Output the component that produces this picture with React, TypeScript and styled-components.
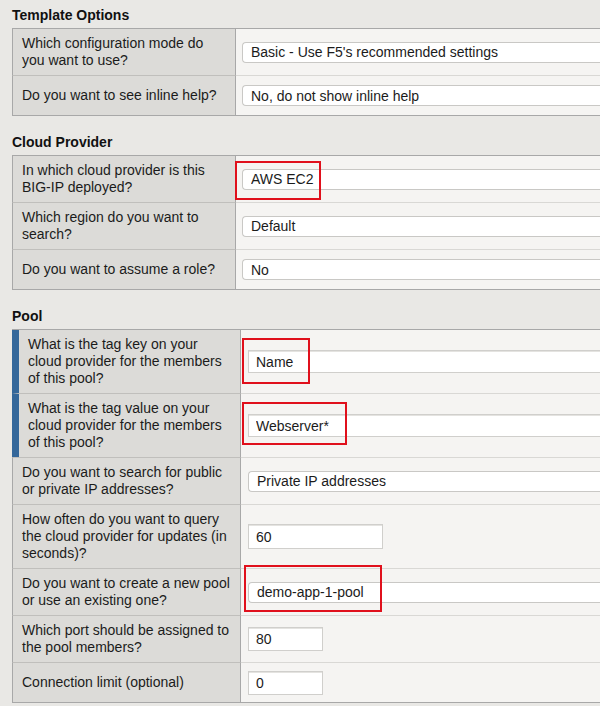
import React from "react";
import styled, { createGlobalStyle } from "styled-components";

const Global = createGlobalStyle`
  html, body {
    margin: 0;
    padding: 0;
    background: #e9e8e5;
    overflow: hidden;
  }
  body {
    font-family: "Liberation Sans", Arial, Helvetica, sans-serif;
    color: #1b1b1b;
  }
`;

const Page = styled.div`
  width: 600px;
  height: 706px;
  overflow: hidden;
  padding-top: 7px;
  box-sizing: border-box;
`;

const Section = styled.section`
  & + & {
    margin-top: 18px;
  }
`;

const Title = styled.h2`
  margin: 0;
  padding: 0 12px 4px;
  font-size: 14px;
  line-height: 17px;
  font-weight: bold;
  color: #111;
`;

const Table = styled.div`
  margin-left: 12px;
  border-top: 1px solid #a8a8a8;
  border-bottom: 1px solid #a8a8a8;
`;

const Row = styled.div<{ $labelW: number }>`
  display: grid;
  grid-template-columns: ${(p) => p.$labelW}px 1fr;
`;

const LabelCell = styled.div<{ $marked?: boolean; $first?: boolean }>`
  box-sizing: border-box;
  background: #dcdbd8;
  border-left: ${(p) => (p.$marked ? "7px solid #34679a" : "1px solid #a8a8a8")};
  border-right: 1px solid #a8a8a8;
  border-top: ${(p) => (p.$first ? "none" : "1px solid #c0bfbc")};
  padding: 6px 8px 6px 9px;
  font-size: 14px;
  line-height: 17px;
  display: flex;
  align-items: center;
`;

const ValueCell = styled.div<{ $first?: boolean; $pad: number }>`
  position: relative;
  box-sizing: border-box;
  background: #f5f4f2;
  border-top: ${(p) => (p.$first ? "none" : "1px solid #d9d8d5")};
  padding: 0 0 0 ${(p) => p.$pad}px;
  min-height: 40px;
  display: flex;
  align-items: center;
`;

const SelectBox = styled.select<{ $w: number }>`
  appearance: none;
  -webkit-appearance: none;
  box-sizing: border-box;
  width: ${(p) => p.$w}px;
  flex: none;
  height: 21px;
  margin: 0;
  padding: 0 0 0 8px;
  background: #fff;
  border: 1px solid #c9c8c5;
  border-right: none;
  border-radius: 4px 0 0 4px;
  font-family: "Liberation Sans", Arial, Helvetica, sans-serif;
  font-size: 14px;
  color: #1b1b1b;
  outline: none;
`;

const TextInput = styled.input<{ $w: number; $h: number }>`
  box-sizing: border-box;
  width: ${(p) => p.$w}px;
  flex: none;
  height: ${(p) => p.$h}px;
  margin: 0;
  padding: 0 0 0 7px;
  background: #fff;
  border: 1px solid #d0cfcc;
  border-radius: 0;
  box-shadow: inset 0 1px 0 #e4e3e0;
  font-family: "Liberation Sans", Arial, Helvetica, sans-serif;
  font-size: 14px;
  color: #1b1b1b;
  outline: none;
`;

const Callout = styled.span`
  position: absolute;
  border: 2px solid #e0101c;
  box-sizing: border-box;
  pointer-events: none;
`;

type Field =
  | { kind: "select"; value: string; w: number }
  | { kind: "input"; value: string; w: number; h: number };

type Mark = { left: number; top: number; width: number; height: number };

type RowData = {
  label: string;
  field: Field;
  marked?: boolean;
  callout?: Mark;
};

type SectionData = {
  title: string;
  labelW: number;
  pad: number;
  rows: RowData[];
};

const sections: SectionData[] = [
  {
    title: "Template Options",
    labelW: 224,
    pad: 6,
    rows: [
      {
        label: "Which configuration mode do you want to use?",
        field: { kind: "select", value: "Basic - Use F5's recommended settings", w: 380 },
      },
      {
        label: "Do you want to see inline help?",
        field: { kind: "select", value: "No, do not show inline help", w: 380 },
      },
    ],
  },
  {
    title: "Cloud Provider",
    labelW: 224,
    pad: 6,
    rows: [
      {
        label: "In which cloud provider is this BIG-IP deployed?",
        field: { kind: "select", value: "AWS EC2", w: 380 },
        callout: { left: -1, top: 5, width: 86, height: 39 },
      },
      {
        label: "Which region do you want to search?",
        field: { kind: "select", value: "Default", w: 380 },
      },
      {
        label: "Do you want to assume a role?",
        field: { kind: "select", value: "No", w: 380 },
      },
    ],
  },
  {
    title: "Pool",
    labelW: 229,
    pad: 7,
    rows: [
      {
        label: "What is the tag key on your cloud provider for the members of this pool?",
        field: { kind: "input", value: "Name", w: 370, h: 23 },
        marked: true,
        callout: { left: 1, top: 8, width: 68, height: 46 },
      },
      {
        label: "What is the tag value on your cloud provider for the members of this pool?",
        field: { kind: "input", value: "Webserver*", w: 370, h: 23 },
        marked: true,
        callout: { left: 1, top: 8, width: 105, height: 43 },
      },
      {
        label: "Do you want to search for public or private IP addresses?",
        field: { kind: "select", value: "Private IP addresses", w: 370 },
      },
      {
        label: "How often do you want to query the cloud provider for updates (in seconds)?",
        field: { kind: "input", value: "60", w: 135, h: 25 },
      },
      {
        label: "Do you want to create a new pool or use an existing one?",
        field: { kind: "select", value: "demo-app-1-pool", w: 370 },
        callout: { left: 3, top: -4, width: 138, height: 47 },
      },
      {
        label: "Which port should be assigned to the pool members?",
        field: { kind: "input", value: "80", w: 75, h: 24 },
      },
      {
        label: "Connection limit (optional)",
        field: { kind: "input", value: "0", w: 75, h: 24 },
      },
    ],
  },
];

function FieldView({ field }: { field: Field }) {
  if (field.kind === "select") {
    return (
      <SelectBox $w={field.w} defaultValue={field.value}>
        <option value={field.value}>{field.value}</option>
      </SelectBox>
    );
  }
  return <TextInput $w={field.w} $h={field.h} defaultValue={field.value} />;
}

export default function App() {
  return (
    <Page>
      <Global />
      {sections.map((s) => (
        <Section key={s.title}>
          <Title>{s.title}</Title>
          <Table>
            {s.rows.map((r, i) => (
              <Row key={r.label} $labelW={s.labelW}>
                <LabelCell $marked={r.marked} $first={i === 0}>
                  {r.label}
                </LabelCell>
                <ValueCell $first={i === 0} $pad={s.pad}>
                  <FieldView field={r.field} />
                  {r.callout && (
                    <Callout
                      style={{
                        left: r.callout.left,
                        top: r.callout.top,
                        width: r.callout.width,
                        height: r.callout.height,
                      }}
                    />
                  )}
                </ValueCell>
              </Row>
            ))}
          </Table>
        </Section>
      ))}
    </Page>
  );
}
